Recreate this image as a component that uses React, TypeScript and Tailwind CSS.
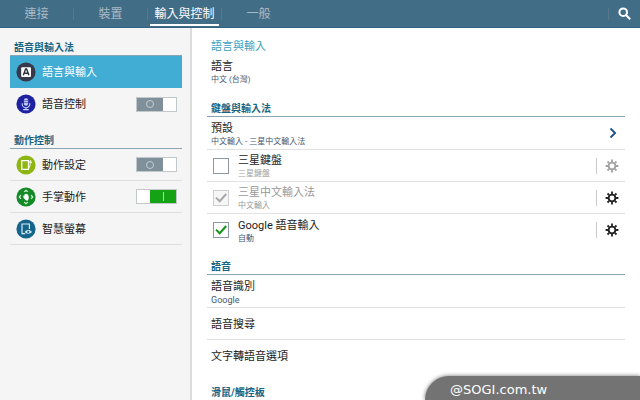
import { Fragment, useState } from "react";
import type { ReactNode } from "react";

const tabs = ["連接", "裝置", "輸入與控制", "一般"];

interface ToggleProps {
  label: string;
  defaultOn?: boolean;
}

function Toggle({ label, defaultOn = false }: ToggleProps) {
  const [on, setOn] = useState(defaultOn);

  return (
    <label className="relative flex h-[15px] w-[41px] shrink-0 border border-[#c3c8cb] bg-white">
      <input
        type="checkbox"
        role="switch"
        aria-label={label}
        checked={on}
        onChange={(e) => setOn(e.target.checked)}
        className="absolute inset-0 cursor-pointer appearance-none"
      />
      <span
        className={`pointer-events-none flex h-full w-[26px] items-center justify-center ${
          on ? "ml-auto bg-[#15a315]" : "bg-[#80909b]"
        }`}
      >
        {on ? (
          <span className="h-[9px] w-px bg-[#a5e0a0]" />
        ) : (
          <span className="size-2 rounded-full border border-[#c3ccd2]" />
        )}
      </span>
    </label>
  );
}

interface TickBoxProps {
  id: string;
  defaultChecked?: boolean;
  disabled?: boolean;
}

function TickBox({ id, defaultChecked, disabled }: TickBoxProps) {
  return (
    <span className="relative ml-[6px] size-4 shrink-0">
      <input
        id={id}
        type="checkbox"
        defaultChecked={defaultChecked}
        disabled={disabled}
        className="peer block size-4 appearance-none border border-[#8b98a3] bg-white disabled:border-[#cfcfcf] disabled:bg-[#f6f6f6]"
      />
      <svg
        viewBox="0 0 16 16"
        fill="none"
        strokeWidth="2"
        className="pointer-events-none absolute inset-0 hidden stroke-[#159315] peer-checked:block peer-disabled:stroke-[#a8a8a8]"
      >
        <path d="M3 7.6 6.7 11.2 13.2 4" />
      </svg>
    </span>
  );
}

function GearIcon() {
  return (
    <svg viewBox="0 0 14 14" className="size-[14px]" fill="none" stroke="currentColor">
      <circle cx="7" cy="7" r="3.4" strokeWidth="1.9" />
      <path
        strokeWidth="1.8"
        d="M7 3V.6M7 11v2.4M3 7H.6M11 7h2.4M4.2 4.2 2.5 2.5M9.8 9.8l1.7 1.7M4.2 9.8l-1.7 1.7M9.8 4.2l1.7-1.7"
      />
    </svg>
  );
}

function InputIcon() {
  return (
    <svg viewBox="0 0 20 20" className="size-5 shrink-0">
      <circle cx="10" cy="10" r="9.6" fill="#36394a" />
      <rect x="5.2" y="5.2" width="9.8" height="9.8" rx="1" fill="#fff" />
      <path d="M7.3 13.2 9.6 7h1l2.3 6.2M8.2 11.2h3.8" fill="none" stroke="#2c2f3c" strokeWidth="1.4" />
    </svg>
  );
}

function VoiceIcon() {
  return (
    <svg viewBox="0 0 20 20" className="size-5 shrink-0" fill="none">
      <circle cx="10" cy="10" r="9.6" fill="#1c22a0" />
      <rect x="7.9" y="4.2" width="4.2" height="7.6" rx="2.1" fill="#c9d0fa" />
      <path d="M8 6.6h4M8 8.6h4" stroke="#1c22a0" strokeWidth=".6" />
      <path d="M6.2 9.2v.8a3.8 3.8 0 0 0 7.6 0v-.8M10 13.8v1.8M7.2 15.6h5.6" stroke="#c9d0fa" strokeWidth="1.1" />
    </svg>
  );
}

function MotionIcon() {
  return (
    <svg viewBox="0 0 20 20" className="size-5 shrink-0" fill="none">
      <circle cx="10" cy="10" r="9.6" fill="#8db613" />
      <path d="M5.8 5.7h6.6v8.6H5.8z" stroke="#fff" strokeWidth="1.2" />
      <path d="M12.4 14.2c1.3-2 1.9-4.4 2.1-7.2M12.8 7.6l1.8-1.8 1 2.2" stroke="#e9f4c4" strokeWidth="1.1" />
    </svg>
  );
}

function PalmIcon() {
  return (
    <svg viewBox="0 0 20 20" className="size-5 shrink-0" fill="none">
      <circle cx="10" cy="10" r="9.6" fill="#148a26" />
      <path
        d="M8.2 4.9 10 3.3l1.8 1.6M8.2 15.1l1.8 1.6 1.8-1.6M4.9 8.2 3.3 10l1.6 1.8M15.1 8.2l1.6 1.8-1.6 1.8"
        stroke="#d3f0d3"
        strokeWidth="1.2"
      />
      <path d="M7.2 8.6 8.4 9V7.4l1.1-.6 1 .3 1.3.5.9 1.6v2.6l-.8 1.8h-1.8L7.6 11z" fill="#fff" />
    </svg>
  );
}

function SmartScreenIcon() {
  return (
    <svg viewBox="0 0 20 20" className="size-5 shrink-0" fill="none">
      <circle cx="10" cy="10" r="9.6" fill="#14648c" />
      <path d="M9.2 14.6H6V5h7.4v5" stroke="#d9ebf4" strokeWidth="1.2" />
      <path d="M8.8 13c1.6-2.6 5.4-2.6 7 0-1.6 2.2-5.4 2.2-7 0z" fill="#d9ebf4" />
      <circle cx="12.3" cy="12.9" r="1.1" fill="#14648c" />
    </svg>
  );
}

interface SideRowProps {
  icon: ReactNode;
  label: string;
  toggle?: "on" | "off";
  divider?: boolean;
}

function SideRow({ icon, label, toggle, divider = true }: SideRowProps) {
  return (
    <li className={`flex h-8 items-center gap-[6px] pl-[6px] pr-[5px] ${divider ? "border-b border-[#dedede]" : ""}`}>
      {icon}
      <a href="#" className="flex-1 pt-[3px] text-[11px] text-[#1c1c1c]">
        {label}
      </a>
      {toggle && <Toggle label={label} defaultOn={toggle === "on"} />}
    </li>
  );
}

function SectionTitle({ children }: { children: ReactNode }) {
  return (
    <h2 className="border-b border-[#8aa5b2] px-1 pt-1 text-[10px] leading-[14px] font-bold text-[#186582]">
      {children}
    </h2>
  );
}

interface MethodRowProps {
  id: string;
  title: string;
  note: string;
  checked?: boolean;
  locked?: boolean;
  noteClass: string;
  gearClass?: string;
  divider?: boolean;
}

function MethodRow({
  id,
  title,
  note,
  checked,
  locked,
  noteClass,
  gearClass = "text-[#222222]",
  divider = true,
}: MethodRowProps) {
  return (
    <li className={`flex h-8 items-center ${divider ? "border-b border-[#e2e2e2]" : ""}`}>
      <TickBox id={id} defaultChecked={checked} disabled={locked} />
      <label htmlFor={id} className="ml-[9px] flex-1 pt-[3px]">
        <span className={`block text-[11px] leading-[14px] ${locked ? "text-[#999999]" : "text-[#1c1c1c]"}`}>
          {title}
        </span>
        <span className={`block text-[8px] leading-3 ${noteClass}`}>{note}</span>
      </label>
      <button
        type="button"
        aria-label={`${title} 設定`}
        className={`flex h-4 items-center border-l border-[#c9c9c9] pr-[6px] pl-2 ${gearClass}`}
      >
        <GearIcon />
      </button>
    </li>
  );
}

export default function App() {
  const [active, setActive] = useState(2);

  return (
    <div className="relative flex h-screen flex-col overflow-hidden bg-white font-[Roboto,'Noto_Sans_CJK_TC',sans-serif]">
      <header className="flex h-7 shrink-0 items-center border-b border-[#2f6380] bg-[#426d87]">
        <nav className="flex h-full flex-1 items-center">
          {tabs.map((tab, i) => (
            <Fragment key={tab}>
              {i > 0 && <span className="h-3 w-px bg-[#56798f]" />}
              <button
                type="button"
                onClick={() => setActive(i)}
                className={`mx-[2px] h-[26px] w-[69px] self-start border-b-2 pt-1 text-[12px] whitespace-nowrap ${
                  i === active ? "border-white text-white" : "border-transparent text-[#a9bac5]"
                }`}
              >
                {tab}
              </button>
            </Fragment>
          ))}
        </nav>
        <button
          type="button"
          aria-label="搜尋"
          className="flex h-3 items-center border-l border-[#56798f] pr-[9px] pl-[9px] text-white"
        >
          <svg viewBox="0 0 13 13" className="size-[13px]" fill="none" stroke="currentColor" strokeWidth="2">
            <circle cx="5.2" cy="5.2" r="3.8" />
            <path d="m8 8 4.2 4.2" />
          </svg>
        </button>
      </header>

      <div className="flex min-h-0 flex-1">
        <aside className="w-[30%] shrink-0 border-r-2 border-[#dcdcdc] bg-[#f5f5f5] pt-[9px] pr-2 pl-[10px]">
          <SectionTitle>語音與輸入法</SectionTitle>
          <ul>
            <li>
              <a
                href="#"
                aria-current="page"
                className="flex h-8 items-center gap-[6px] bg-[#41acd4] pl-[6px] text-[11px] text-white"
              >
                <InputIcon />
                <span className="pt-[3px]">語言與輸入</span>
              </a>
            </li>
            <SideRow icon={<VoiceIcon />} label="語音控制" toggle="off" divider={false} />
          </ul>
          <div className="pt-[10px]">
            <SectionTitle>動作控制</SectionTitle>
            <ul>
              <SideRow icon={<MotionIcon />} label="動作設定" toggle="off" />
              <SideRow icon={<PalmIcon />} label="手掌動作" toggle="on" />
              <SideRow icon={<SmartScreenIcon />} label="智慧螢幕" />
            </ul>
          </div>
        </aside>

        <main className="min-w-0 flex-1 overflow-hidden pt-[11px] pr-[15px] pl-[15px]">
          <h1 className="px-1 text-[11px] leading-4 text-[#3c9fc0]">語言與輸入</h1>
          <button type="button" className="block w-full px-1 pt-[5px] pb-3 text-left">
            <span className="block text-[11px] leading-[14px] text-[#1c1c1c]">語言</span>
            <span className="block text-[8px] leading-3 text-[#45586f]">中文 (台灣)</span>
          </button>

          <SectionTitle>鍵盤與輸入法</SectionTitle>
          <button
            type="button"
            className="flex h-[33px] w-full items-center border-b border-[#e2e2e2] pr-2 pl-1 text-left"
          >
            <span className="flex-1 pt-[3px]">
              <span className="block text-[11px] leading-[14px] text-[#1c1c1c]">預設</span>
              <span className="block text-[8px] leading-3 text-[#45586f]">中文輸入 - 三星中文輸入法</span>
            </span>
            <svg viewBox="0 0 8 12" className="h-3 w-2" fill="none" stroke="#1b4f86" strokeWidth="1.8">
              <path d="m1.5 1.5 4.6 4.5-4.6 4.5" />
            </svg>
          </button>
          <ul>
            <MethodRow
              id="samsung-keyboard"
              title="三星鍵盤"
              note="三星鍵盤"
              noteClass="text-[#a3a3a3]"
              gearClass="text-[#a3a3a3]"
            />
            <MethodRow
              id="samsung-chinese"
              title="三星中文輸入法"
              note="中文輸入"
              checked
              locked
              noteClass="text-[#999999]"
            />
            <MethodRow
              id="google-voice"
              title="Google 語音輸入"
              note="自動"
              checked
              noteClass="text-[#45586f]"
              divider={false}
            />
          </ul>

          <div className="pt-[10px]">
            <SectionTitle>語音</SectionTitle>
            <button type="button" className="block h-[33px] w-full border-b border-[#e2e2e2] px-1 pt-[3px] text-left">
              <span className="block text-[11px] leading-[14px] text-[#1c1c1c]">語音識別</span>
              <span className="block text-[9px] leading-3 text-[#45586f]">Google</span>
            </button>
            <button
              type="button"
              className="block h-8 w-full border-b border-[#e2e2e2] px-1 pt-[3px] text-left text-[11px] text-[#1c1c1c]"
            >
              語音搜尋
            </button>
            <button type="button" className="block h-8 w-full px-1 pt-[3px] text-left text-[11px] text-[#1c1c1c]">
              文字轉語音選項
            </button>
          </div>

          <div className="pt-[10px]">
            <SectionTitle>滑鼠/觸控板</SectionTitle>
          </div>
        </main>
      </div>

      <footer className="absolute right-0 bottom-0 h-6 w-[215px] rounded-tl-[24px] bg-[#737373] pl-[25px] font-['DejaVu_Sans',sans-serif] text-[13px] leading-7 text-white shadow-[0_0_4px_#00000090]">
        @SOGI.com.tw
      </footer>
    </div>
  );
}
